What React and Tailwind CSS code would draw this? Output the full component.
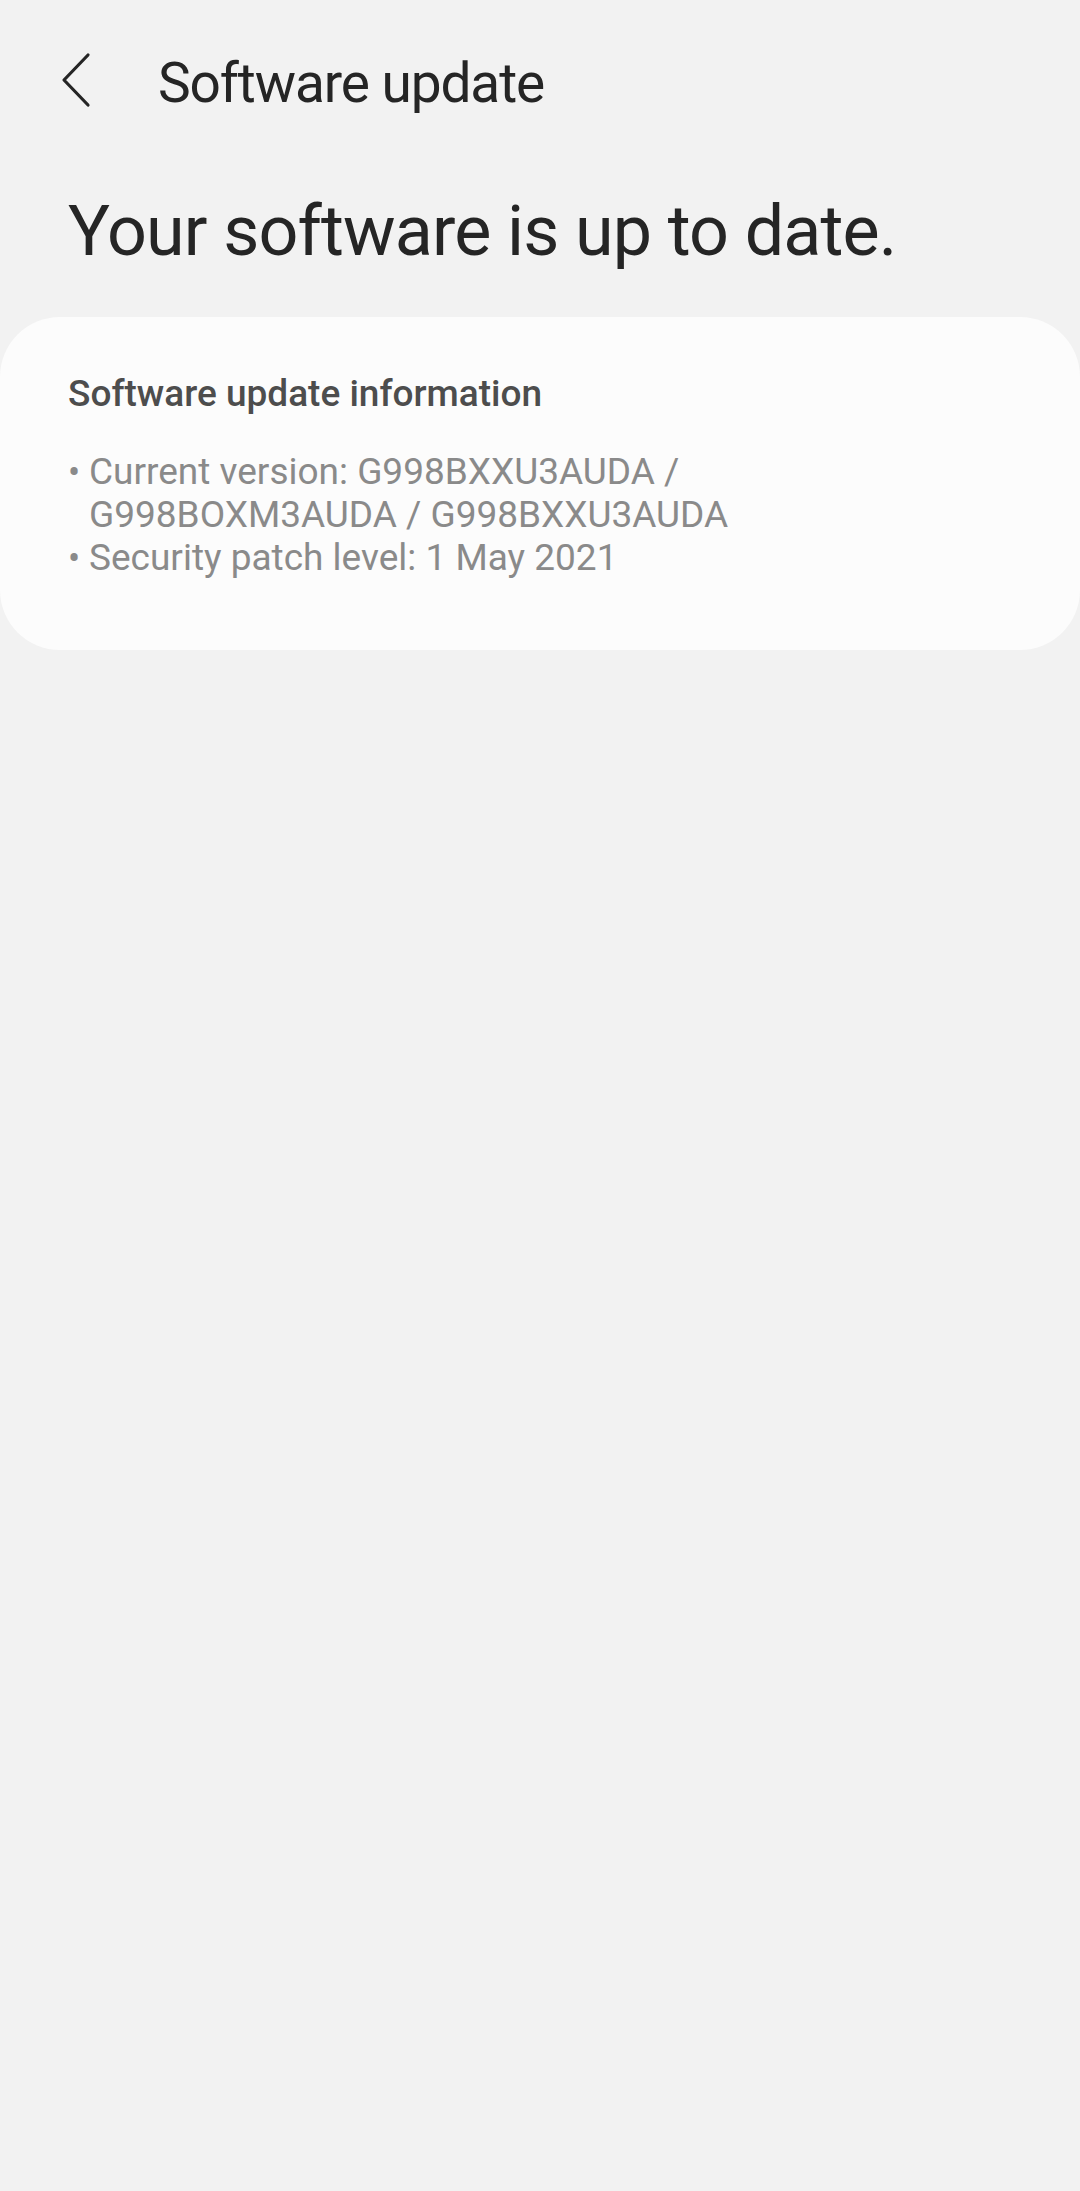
export default function App() {
  const font = { fontFamily: 'Roboto, "Noto Sans", sans-serif' };
  return (
    <div className="min-h-[2191px] w-full bg-[#f2f2f2]" style={font}>
      {/* App bar */}
      <div className="flex h-[166px] items-center">
        <button className="ml-[60px] mt-[-6px] flex h-[56px] w-[32px] items-center justify-center">
          <svg width="30" height="56" viewBox="0 0 30 56" fill="none">
            <path d="M27 3 L3 28 L27 53" stroke="#252525" strokeWidth="3.2" strokeLinecap="round" strokeLinejoin="round" />
          </svg>
        </button>
        <h1 className="ml-[66px] text-[55px] leading-[55px] tracking-[-1.1px] text-[#252525]">Software update</h1>
      </div>

      {/* Status */}
      <h2 className="ml-[68px] mt-[23px] text-[70px] leading-[84px] tracking-[-0.85px] text-[#252525]">
        Your software is up to date.
      </h2>

      {/* Info card */}
      <div className="mt-[44px] rounded-[60px] bg-[#fcfcfc] pl-[68px] pr-[40px] pt-[55px] pb-[71px]">
        <p className="text-[37px] font-medium leading-[43px] text-[#4d4d4d]">Software update information</p>
        <ul className="mt-[35px] text-[37px] leading-[43px] text-[#8a8a8a]">
          <li className="flex">
            <span className="w-[21px] shrink-0 pt-[4px] text-[36px] leading-[39px]">•</span>
            <span>Current version: G998BXXU3AUDA /<br />G998BOXM3AUDA / G998BXXU3AUDA</span>
          </li>
          <li className="flex">
            <span className="w-[21px] shrink-0 pt-[4px] text-[36px] leading-[39px]">•</span>
            <span>Security patch level: 1 May 2021</span>
          </li>
        </ul>
      </div>
    </div>
  );
}
